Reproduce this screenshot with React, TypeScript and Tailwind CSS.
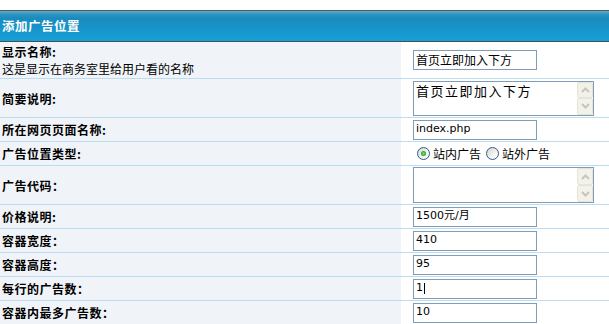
import React from "react";

const CJK = "font-['Noto_Sans_CJK_SC','Noto_Sans',sans-serif]";
const LAT = "font-['DejaVu_Sans','Noto_Sans_CJK_SC',sans-serif]";

function Row({
  h,
  label,
  children,
}: {
  h: string;
  label: React.ReactNode;
  children?: React.ReactNode;
}) {
  return (
    <div className={`flex border-b border-[#bcdcf2] ${h}`}>
      <div className="w-[401px] shrink-0 bg-[#f0f4f8] pl-[2px] flex items-center text-black">
        {label}
      </div>
      <div className="flex-1 bg-white pl-[12px] flex items-center">{children}</div>
    </div>
  );
}

function Label({ children }: { children: React.ReactNode }) {
  return <span className="font-bold tracking-[0.5px] leading-[17px]">{children}</span>;
}

function TextInput({ value, caret }: { value: string; caret?: boolean }) {
  return (
    <div
      className={`relative w-[124px] h-[20px] border border-[#7f9db9] bg-white pl-[2px] flex items-center text-[11px] text-black ${LAT} whitespace-nowrap overflow-hidden`}
    >
      <span>{value}</span>
      {caret && <span className="ml-[1px] w-[1px] h-[11px] bg-black" />}
    </div>
  );
}

function CjkInput({ value }: { value: string }) {
  return (
    <div
      className={`w-[124px] h-[20px] border border-[#7f9db9] bg-white pl-[2px] flex items-center text-[12px] text-black ${CJK} whitespace-nowrap overflow-hidden`}
    >
      <span>{value}</span>
    </div>
  );
}

function Chevron({ up }: { up?: boolean }) {
  return (
    <svg width="9" height="6" viewBox="0 0 9 6">
      <path
        d={up ? "M1 5 L4.5 1.5 L8 5" : "M1 1 L4.5 4.5 L8 1"}
        fill="none"
        stroke="#c8c6b8"
        strokeWidth="2"
      />
    </svg>
  );
}

function FakeTextarea({ h, value }: { h: string; value?: string }) {
  return (
    <div className={`w-[181px] ${h} border border-[#7f9db9] bg-white flex`}>
      <div
        className={`flex-1 pl-[2px] pt-[1px] text-[13px] leading-[15px] tracking-[1.5px] text-black ${CJK} whitespace-nowrap overflow-hidden`}
      >
        {value}
      </div>
      <div className="w-[16px] flex flex-col">
        <div className="flex-1 bg-[#f3f2ea] border border-[#e6e4d8] rounded-[2px] flex items-center justify-center">
          <Chevron up />
        </div>
        <div className="flex-1 bg-[#f3f2ea] border border-[#e6e4d8] rounded-[2px] flex items-center justify-center">
          <Chevron />
        </div>
      </div>
    </div>
  );
}

function Radio({ checked }: { checked?: boolean }) {
  return (
    <span className="w-[13px] h-[13px] rounded-full border border-[#2f5b8a] bg-[linear-gradient(135deg,#d6d5cd_0%,#f4f4f0_60%,#ffffff_100%)] flex items-center justify-center shrink-0">
      {checked && (
        <span className="w-[5px] h-[5px] rounded-full bg-[radial-gradient(circle,#7fe07f_0%,#21a121_70%)]" />
      )}
    </span>
  );
}

export default function App() {
  return (
    <div className={`w-[609px] h-[324px] overflow-hidden bg-white text-[12px] ${CJK}`}>
      <div className="h-[10px] bg-white" />
      <div className="h-[1px] bg-[#5c5b48]" />
      <div className="h-[30px] bg-[linear-gradient(to_bottom,#5aaccd_0%,#2b93c2_12%,#1a8bbd_25%,#15a0d9_100%)] flex items-center pl-[2px]">
        <span className="text-white font-bold tracking-[0.5px] text-[12.5px]">添加广告位置</span>
      </div>
      <div className="h-[1px] bg-[#4d4d4d]" />

      <Row
        h="h-[37px]"
        label={
          <div className="flex flex-col leading-[17px]">
            <Label>显示名称:</Label>
            <span>这是显示在商务室里给用户看的名称</span>
          </div>
        }
      >
        <CjkInput value="首页立即加入下方" />
      </Row>

      <Row h="h-[39px]" label={<Label>简要说明:</Label>}>
        <FakeTextarea h="h-[35px]" value="首页立即加入下方" />
      </Row>

      <Row h="h-[24px]" label={<Label>所在网页页面名称:</Label>}>
        <TextInput value="index.php" />
      </Row>

      <Row h="h-[24px]" label={<Label>广告位置类型:</Label>}>
        <div className="flex items-center pl-[4px] text-[12px] text-black">
          <Radio checked />
          <span className="ml-[3px]">站内广告</span>
          <span className="ml-[5px]">
            <Radio />
          </span>
          <span className="ml-[3px]">站外广告</span>
        </div>
      </Row>

      <Row h="h-[39px]" label={<Label>广告代码：</Label>}>
        <FakeTextarea h="h-[36px]" />
      </Row>

      <Row h="h-[24px]" label={<Label>价格说明:</Label>}>
        <TextInput value="1500元/月" />
      </Row>
      <Row h="h-[24px]" label={<Label>容器宽度：</Label>}>
        <TextInput value="410" />
      </Row>
      <Row h="h-[24px]" label={<Label>容器高度：</Label>}>
        <TextInput value="95" />
      </Row>
      <Row h="h-[24px]" label={<Label>每行的广告数：</Label>}>
        <TextInput value="1" caret />
      </Row>
      <Row h="h-[24px]" label={<Label>容器内最多广告数：</Label>}>
        <TextInput value="10" />
      </Row>
    </div>
  );
}
